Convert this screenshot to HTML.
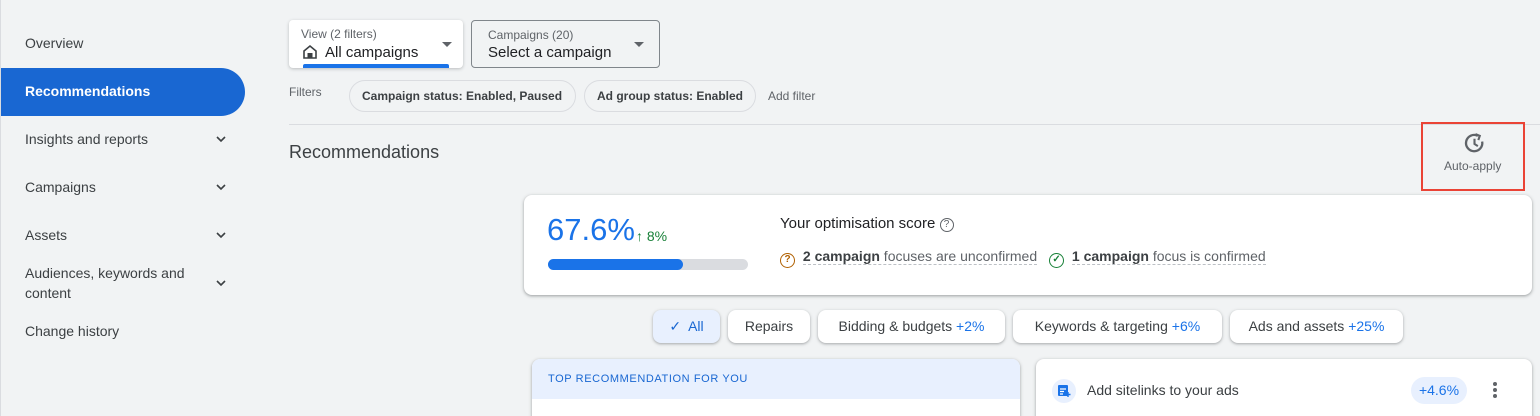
<!DOCTYPE html>
<html style="width:1540px;height:416px;overflow:hidden"><head><style>
*{box-sizing:border-box;margin:0;padding:0}
body{width:1540px;height:416px;overflow:hidden;background:#f1f3f4;font-family:"Liberation Sans",Arial,sans-serif;color:#202124;position:relative}
.a{position:absolute}
.nav{left:25px;font-size:14px;color:#3c4043}
.chev{left:215px;width:12px;height:12px}
.chip{height:32px;border:1px solid #dadce0;border-radius:16px;font-size:12px;font-weight:bold;color:#3c4043;line-height:30px;padding:0 12px;top:80px}
.tab{top:310px;height:33px;background:#fff;border-radius:8px;box-shadow:0 1px 2px rgba(60,64,67,.3),0 1px 3px 1px rgba(60,64,67,.1);font-size:14px;color:#3c4043;line-height:33px;text-align:center}
.tab b{font-weight:normal;color:#1a73e8}
.card{background:#fff;border-radius:8px;box-shadow:0 1px 2px rgba(60,64,67,.3),0 1px 3px 1px rgba(60,64,67,.15)}
</style></head><body>
<div class="a" style="left:0;top:0;width:1px;height:416px;background:#dadce0"></div>
<div class="a nav" style="top:35px">Overview</div>
<div class="a" style="left:1px;top:68px;width:244px;height:48px;background:#1967d2;border-radius:0 24px 24px 0"></div>
<div class="a nav" style="top:83px;color:#fff;font-weight:bold">Recommendations</div>
<div class="a nav" style="top:131px">Insights and reports</div>
<div class="a nav" style="top:179px">Campaigns</div>
<div class="a nav" style="top:227px">Assets</div>
<div class="a nav" style="top:263px;line-height:20px">Audiences, keywords and<br>content</div>
<div class="a nav" style="top:323px">Change history</div>
<svg class="a chev" style="top:133px" viewBox="0 0 12 12"><path d="M2 4l4 4 4-4" fill="none" stroke="#3c4043" stroke-width="1.6"/></svg>
<svg class="a chev" style="top:181px" viewBox="0 0 12 12"><path d="M2 4l4 4 4-4" fill="none" stroke="#3c4043" stroke-width="1.6"/></svg>
<svg class="a chev" style="top:229px" viewBox="0 0 12 12"><path d="M2 4l4 4 4-4" fill="none" stroke="#3c4043" stroke-width="1.6"/></svg>
<svg class="a chev" style="top:277px" viewBox="0 0 12 12"><path d="M2 4l4 4 4-4" fill="none" stroke="#3c4043" stroke-width="1.6"/></svg>

<div class="a" style="left:289px;top:20px;width:174px;height:48px;background:#fff;border-radius:4px;box-shadow:0 1px 3px rgba(60,64,67,.3)"></div>
<div class="a" style="left:301px;top:27px;font-size:12px;color:#5f6368">View (2 filters)</div>
<svg class="a" style="left:302px;top:44px" width="16" height="16" viewBox="0 0 16 16"><path d="M2 7L8 2l6 5v7H2z" fill="none" stroke="#3c4043" stroke-width="1.6"/><rect x="5.5" y="9" width="5" height="5" fill="#3c4043"/></svg>
<div class="a" style="left:325px;top:44px;font-size:15px">All campaigns</div>
<div class="a" style="left:442px;top:42px;border:5px solid transparent;border-top:5px solid #5f6368"></div>
<div class="a" style="left:303px;top:64px;width:146px;height:4px;background:#1a73e8;border-radius:2px 2px 0 0"></div>

<div class="a" style="left:471px;top:20px;width:189px;height:48px;border:1px solid #80868b;border-radius:4px"></div>
<div class="a" style="left:488px;top:28px;font-size:12px;color:#5f6368">Campaigns (20)</div>
<div class="a" style="left:488px;top:44px;font-size:15px">Select a campaign</div>
<div class="a" style="left:634px;top:42px;border:5px solid transparent;border-top:5px solid #5f6368"></div>

<div class="a" style="left:289px;top:85px;font-size:12px;color:#5f6368">Filters</div>
<div class="a chip" style="left:349px;width:227px">Campaign status: Enabled, Paused</div>
<div class="a chip" style="left:584px;width:172px">Ad group status: Enabled</div>
<div class="a" style="left:768px;top:89px;font-size:12px;color:#5f6368">Add filter</div>
<div class="a" style="left:289px;top:124px;width:1251px;height:1px;background:#dadce0"></div>

<div class="a" style="left:289px;top:142px;font-size:18px;color:#3c4043">Recommendations</div>
<div class="a" style="left:1421px;top:122px;width:104px;height:69px;border:2px solid #ea4335"></div>
<svg class="a" style="left:1463px;top:132px" width="23" height="23" viewBox="0 0 24 24"><path d="M20 10A8.5 8.5 0 1 1 15.5 4" fill="none" stroke="#5f6368" stroke-width="2.4"/><path d="M13 2.2l4.5 1.8-1.5 4.4" fill="none" stroke="#5f6368" stroke-width="2.2"/><path d="M12 7v5.5l3.5 2.2" fill="none" stroke="#5f6368" stroke-width="2.2"/></svg>
<div class="a" style="left:1444px;top:159px;font-size:12px;color:#5f6368">Auto-apply</div>

<div class="a card" style="left:524px;top:195px;width:1008px;height:100px"></div>
<div class="a" style="left:547px;top:212px;font-size:31px;color:#1a73e8">67.6%</div>
<div class="a" style="left:636px;top:228px;font-size:14px;color:#188038">↑ 8%</div>
<div class="a" style="left:548px;top:259px;width:200px;height:11px;background:#dadce0;border-radius:6px"></div>
<div class="a" style="left:548px;top:259px;width:135px;height:11px;background:#1a73e8;border-radius:6px"></div>
<div class="a" style="left:780px;top:215px;font-size:15px">Your optimisation score <span style="color:#5f6368;border:1.3px solid #5f6368;border-radius:50%;display:inline-block;width:14px;height:14px;line-height:12px;text-align:center;font-size:10px;vertical-align:1px">?</span></div>
<div class="a" style="left:780px;top:248px;font-size:14px;color:#5f6368;white-space:nowrap">
<span style="color:#b06000;border:1.5px solid #b06000;border-radius:50%;display:inline-block;width:15px;height:15px;line-height:12px;text-align:center;font-weight:bold;font-size:10px;vertical-align:-1px">?</span>
<span style="border-bottom:1px dashed #bdc1c6;margin-left:4px"><b style="color:#3c4043">2 campaign</b> focuses are unconfirmed</span>
<span style="color:#188038;border:1.5px solid #188038;border-radius:50%;display:inline-block;width:15px;height:15px;line-height:12px;text-align:center;margin-left:8px;font-size:10px;font-weight:bold;vertical-align:-1px">✓</span>
<span style="border-bottom:1px dashed #bdc1c6;margin-left:4px"><b style="color:#3c4043">1 campaign</b> focus is confirmed</span></div>

<div class="a tab" style="left:653px;width:67px;background:#e8f0fe;color:#1967d2">✓&nbsp; All</div>
<div class="a tab" style="left:728px;width:82px">Repairs</div>
<div class="a tab" style="left:818px;width:187px">Bidding &amp; budgets <b>+2%</b></div>
<div class="a tab" style="left:1013px;width:209px">Keywords &amp; targeting <b>+6%</b></div>
<div class="a tab" style="left:1230px;width:173px">Ads and assets <b>+25%</b></div>

<div class="a card" style="left:532px;top:359px;width:488px;height:70px;overflow:hidden"><div style="height:40px;background:#e8f0fe;padding:14px 16px;font-size:11px;color:#1967d2;letter-spacing:.6px">TOP RECOMMENDATION FOR YOU</div></div>
<div class="a card" style="left:1036px;top:359px;width:496px;height:70px"></div>
<div class="a" style="left:1052px;top:379px;width:24px;height:24px;border-radius:50%;background:#e8f0fe"></div>
<svg class="a" style="left:1057px;top:384px" width="14" height="14" viewBox="0 0 14 14"><rect x="1" y="1" width="10" height="11" rx="1" fill="#1a73e8"/><path d="M3 5h6M3 7.5h4M3 10h3" stroke="#fff" stroke-width="1.2"/><path d="M11 8v5M8.5 10.5h5" stroke="#1a73e8" stroke-width="1.4"/></svg>
<div class="a" style="left:1087px;top:382px;font-size:14px;color:#3c4043">Add sitelinks to your ads</div>
<div class="a" style="left:1411px;top:377px;width:56px;height:27px;background:#e8f0fe;border-radius:14px;color:#1a73e8;font-size:14px;line-height:27px;text-align:center">+4.6%</div>
<div class="a" style="left:1493px;top:382px;width:4px;height:4px;border-radius:2px;background:#5f6368;box-shadow:0 6px 0 #5f6368,0 12px 0 #5f6368"></div>
</body></html>
